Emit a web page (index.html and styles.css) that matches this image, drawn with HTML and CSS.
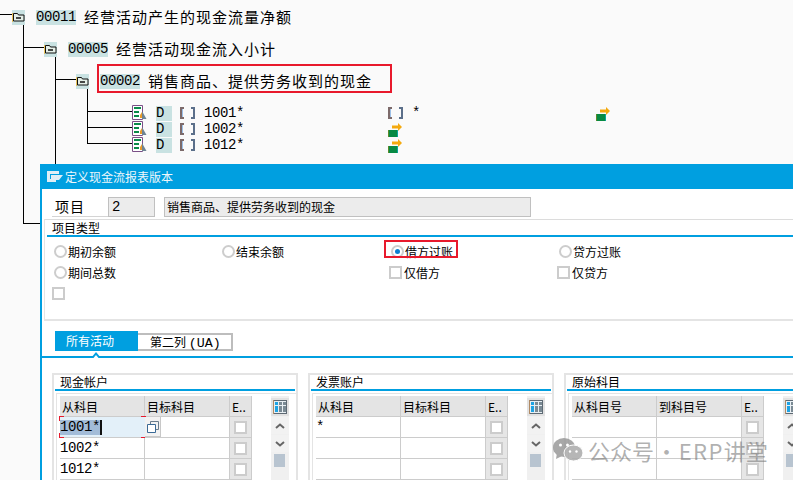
FILE: index.html
```html
<!DOCTYPE html>
<html lang="zh">
<head>
<meta charset="utf-8">
<title>定义现金流报表版本</title>
<link rel="stylesheet" href="styles.css">
</head>
<body>
<svg width="0" height="0" class="defs">
  <symbol id="folder" viewBox="0 0 13 15">
    <path d="M1.500 3.500h4l1 1.500h5.500v6H1.500z" fill="#e4efe8" stroke="#111"/>
    <path d="M.5 3v9" stroke="#e8c35a"/>
    <path d="M4 8h5" stroke="#111" stroke-width="1.500"/>
  </symbol>
  <symbol id="doc" viewBox="0 0 15 16">
    <path d="M.5 .5h10v14H.5z" fill="#fff" stroke="#7a4f86"/>
    <path d="M2 3h7M2 7h5M2 11h5" stroke="#0a8a4a" stroke-width="2"/>
    <path d="M10 6l4.500 8H10z" fill="#6f8494"/>
    <path d="M8 10l2-3v6H8z" fill="#e89a2a"/>
  </symbol>
  <symbol id="move" viewBox="0 0 15 14">
    <path d="M0 7h10v7H0z" fill="#078a43"/>
    <path d="M9 7h1v7H9z" fill="#0aa59a"/>
    <path d="M0 7h1v7H0z" fill="#5d8a2a"/>
    <path d="M4 2.500h6V0l4 4-4 4V5.500H4z" fill="#f4a90e"/>
  </symbol>
  <symbol id="cols" viewBox="0 0 14 14">
    <path d="M0 0h14v14H0z" fill="#5e6a74"/>
    <path d="M0 0h1v14H0z" fill="#b08a64"/>
    <path d="M1 1h12v12H1z" fill="#e8eef2"/>
    <path d="M2 2h3v10H2z" fill="#1ea3e3"/>
    <path d="M6 2h3v10H6z" fill="#7a8a94"/>
    <path d="M10 2h3v10h-3z" fill="#7a8a94"/>
    <path d="M1 5h12v1H1z" fill="#e8eef2"/>
  </symbol>
  <symbol id="up" viewBox="0 0 10 6">
    <path d="M1 5l4-3.500L9 5" fill="none" stroke="#666" stroke-width="2"/>
  </symbol>
  <symbol id="down" viewBox="0 0 10 6">
    <path d="M1 1l4 3.500L9 1" fill="none" stroke="#666" stroke-width="2"/>
  </symbol>
</svg>

<main class="screen">
  <svg class="connectors" width="793" height="480" shape-rendering="crispEdges">
    <path d="M0 14.500H12M23.500 25V223.500H40M24 47.500H44M55.500 57V164M56 79.500H76M87.500 89V143.500H132M88 111.500H132M88 127.500H132" fill="none" stroke="#000"/>
  </svg>

  <section class="tree">
    <div class="node level-1">
      <span class="node-icon"><svg width="13" height="15"><use href="#folder"/></svg></span>
      <span class="code">00011</span><span class="node-text">经营活动产生的现金流量净额</span>
    </div>
    <div class="node level-2">
      <span class="node-icon"><svg width="13" height="15"><use href="#folder"/></svg></span>
      <span class="code">00005</span><span class="node-text">经营活动现金流入小计</span>
    </div>
    <div class="node level-3">
      <span class="node-icon"><svg width="13" height="15"><use href="#folder"/></svg></span>
      <span class="code">00002</span><span class="node-text">销售商品、提供劳务收到的现金</span>
      <span class="mark mark-tree"></span>
    </div>
    <div class="leaves">
      <div class="leaf">
        <svg width="15" height="16"><use href="#doc"/></svg>
        <span class="leaf-d">D</span><span class="bracket"><i></i><i></i></span><span class="mono">1001*</span>
        <span class="leaf-mid"><span class="bracket"><i></i><i></i></span><span class="mono star">*</span></span>
        <svg class="move" width="15" height="14"><use href="#move"/></svg>
      </div>
      <div class="leaf">
        <svg width="15" height="16"><use href="#doc"/></svg>
        <span class="leaf-d">D</span><span class="bracket"><i></i><i></i></span><span class="mono">1002*</span>
        <svg class="move" width="15" height="14"><use href="#move"/></svg>
        <span></span>
      </div>
      <div class="leaf">
        <svg width="15" height="16"><use href="#doc"/></svg>
        <span class="leaf-d">D</span><span class="bracket"><i></i><i></i></span><span class="mono">1012*</span>
        <svg class="move" width="15" height="14"><use href="#move"/></svg>
        <span></span>
      </div>
    </div>
  </section>

  <section class="dialog">
    <header class="titlebar">
      <svg width="16" height="11" viewBox="0 0 16 11"><path d="M0 0h12v3H3v5h6v3H0z" fill="#dfeef6"/><path d="M4 4h12l-4 5H4z" fill="#dfeef6"/></svg>
      <span>定义现金流报表版本</span>
    </header>

    <div class="item-row">
      <span class="item-label">项目</span>
      <span class="field field-short">2</span>
      <span class="field field-long">销售商品、提供劳务收到的现金</span>
    </div>

    <fieldset class="type-box">
      <div class="box-title">项目类型</div>
      <div class="options">
        <label class="opt"><span class="radio"></span>期初余额</label>
        <label class="opt"><span class="radio"></span>结束余额</label>
        <label class="opt"><span class="radio on"></span>借方过账<span class="mark mark-opt"></span></label>
        <label class="opt"><span class="radio"></span>贷方过账</label>
        <label class="opt"><span class="radio"></span>期间总数</label>
        <span></span>
        <label class="opt"><span class="check"></span>仅借方</label>
        <label class="opt"><span class="check"></span>仅贷方</label>
        <label class="opt"><span class="check"></span></label>
      </div>
    </fieldset>

    <nav class="tabs">
      <span class="tab tab-on">所有活动<svg class="caret" width="10" height="7" viewBox="0 0 10 7"><path d="M0 7l5-6 5 6z" fill="#009fe0"/><path d="M2.500 7l2.500-3 2.500 3z" fill="#fff"/></svg></span>
      <span class="tab">第二列 <span class="tab-latin">(UA)</span></span>
    </nav>

    <div class="groups">
      <div class="group">
        <div class="group-title">现金帐户</div>
        <div class="group-body">
          <div class="table">
            <div class="th">从科目</div><div class="th">目标科目</div><div class="th">E..</div>
            <div class="td td-active"><span class="sel">1001*</span><i class="cursor"></i><span class="corner c1"></span><span class="corner c2"></span><span class="corner c3"></span><span class="corner c4"></span></div>
            <div class="td"><span class="f4"><svg width="12" height="12" viewBox="0 0 12 12"><path d="M3.500 .5h8v8h-8z" fill="none" stroke="#6a7c8c"/><path d="M.5 3.500h8v8h-8z" fill="#fff" stroke="#3a6a96"/></svg></span></div>
            <div class="tc"><span class="check"></span></div>
            <div class="td">1002*</div><div class="td"></div><div class="tc"><span class="check"></span></div>
            <div class="td">1012*</div><div class="td"></div><div class="tc"><span class="check"></span></div>
          </div>
          <div class="scroll">
            <span class="sb sb-head"><svg width="14" height="14"><use href="#cols"/></svg></span>
            <span class="sb"><svg width="10" height="6"><use href="#up"/></svg></span>
            <span class="sb"><svg width="10" height="6"><use href="#down"/></svg></span>
            <span class="thumb"></span>
          </div>
        </div>
      </div>

      <div class="group">
        <div class="group-title">发票账户</div>
        <div class="group-body">
          <div class="table">
            <div class="th">从科目</div><div class="th">目标科目</div><div class="th">E..</div>
            <div class="td">*</div><div class="td"></div><div class="tc"><span class="check"></span></div>
            <div class="td"></div><div class="td"></div><div class="tc"><span class="check"></span></div>
            <div class="td"></div><div class="td"></div><div class="tc"><span class="check"></span></div>
          </div>
          <div class="scroll">
            <span class="sb sb-head"><svg width="14" height="14"><use href="#cols"/></svg></span>
            <span class="sb"><svg width="10" height="6"><use href="#up"/></svg></span>
            <span class="sb"><svg width="10" height="6"><use href="#down"/></svg></span>
            <span class="thumb"></span>
          </div>
        </div>
      </div>

      <div class="group">
        <div class="group-title">原始科目</div>
        <div class="group-body">
          <div class="table">
            <div class="th">从科目号</div><div class="th">到科目号</div><div class="th">E..</div>
            <div class="td"></div><div class="td"></div><div class="tc"><span class="check"></span></div>
            <div class="td"></div><div class="td"></div><div class="tc"><span class="check"></span></div>
            <div class="td"></div><div class="td"></div><div class="tc"><span class="check"></span></div>
          </div>
          <div class="scroll">
            <span class="sb sb-head"><svg width="14" height="14"><use href="#cols"/></svg></span>
            <span class="sb"><svg width="10" height="6"><use href="#up"/></svg></span>
            <span class="sb"><svg width="10" height="6"><use href="#down"/></svg></span>
            <span class="thumb"></span>
          </div>
        </div>
      </div>
    </div>
  </section>

  <aside class="watermark">
    <svg width="30" height="24" viewBox="0 0 30 24"><ellipse cx="11" cy="9.500" rx="11" ry="9.500" fill="#9a9a9a"/><path d="M4 15l-1 6 6-3z" fill="#9a9a9a"/><ellipse cx="20.500" cy="15" rx="9.500" ry="8" fill="#aaa" stroke="#fff"/><circle cx="7.500" cy="7" r="1.500" fill="#fff"/><circle cx="14.500" cy="7" r="1.500" fill="#fff"/><circle cx="17" cy="13.500" r="1.200" fill="#fff"/><circle cx="23.500" cy="13.500" r="1.200" fill="#fff"/></svg>
    <span class="wm-text">公众号 · <span class="wm-latin">ERP</span>讲堂</span>
  </aside>
</main>
</body>
</html>
```
FILE: styles.css
```css
* { box-sizing: border-box; }
html, body { margin: 0; padding: 0; }
body {
  background: #fafafa;
  color: #000;
  font-family: "Noto Sans CJK SC", "Liberation Sans", sans-serif;
  font-size: 12px;
}
.defs { position: absolute; }
.screen {
  position: relative;
  width: 793px;
  height: 480px;
  overflow: hidden;
}
.connectors { position: absolute; left: 0; top: 0; }

.tree { padding-top: 10px; position: relative; }
.node {
  display: flex;
  align-items: center;
  height: 15px;
  position: relative;
}
.level-1 { margin-left: 12px; }
.level-2 { margin-left: 44px; margin-top: 17px; }
.level-3 { margin-left: 76px; margin-top: 17px; }
.node-icon {
  width: 13px;
  height: 15px;
  background: #c9e2e2;
  margin-right: 11px;
  display: block;
}
.node-icon svg { display: block; }
.code {
  font-family: "Liberation Mono", monospace;
  font-size: 14px;
  letter-spacing: -0.4px;
  line-height: 15px;
  width: 40px;
  background: #c9e2e2;
  margin-right: 8px;
}
.node-text {
  font-size: 15px;
  letter-spacing: 1px;
  line-height: 15px;
  margin-bottom: 3px;
  white-space: nowrap;
}
.mark { position: absolute; border: 2px solid #e8192c; }
.mark-tree { left: 21px; top: -10px; width: 295px; height: 29px; }

.leaves { margin-left: 132px; margin-top: 16px; }
.leaf {
  display: grid;
  grid-template-columns: 24px 24px 24px 184px 208px 15px;
  align-items: center;
  height: 16px;
}
.leaf-d {
  width: 16px;
  height: 15px;
  background: #c9e2e2;
  font-family: "Liberation Mono", monospace;
  font-size: 14px;
  line-height: 15px;
}
.mono {
  font-family: "Liberation Mono", monospace;
  font-size: 14px;
  letter-spacing: -0.4px;
  line-height: 15px;
}
.star { margin-left: 9px; }
.bracket { display: inline-flex; gap: 7px; width: 15px; vertical-align: middle; }
.bracket i {
  display: block;
  width: 4px;
  height: 12px;
  border: 2px solid #7c6a6a;
  border-right: 0;
  box-shadow: inset 1px 0 0 #9cc0e8;
}
.bracket i + i { border: 2px solid #5b6f8a; border-left: 0; box-shadow: none; }
.leaf-mid { display: flex; align-items: center; }
.move { align-self: end; }

.dialog {
  position: absolute;
  left: 40px;
  top: 164px;
  width: 780px;
  height: 316px;
  background: #fff;
  border-left: 2px solid #009fe0;
  overflow: hidden;
}
.titlebar {
  height: 25px;
  margin-left: -2px;
  background: #009fe0;
  color: #eef7fb;
  display: flex;
  align-items: center;
  gap: 2px;
  padding-left: 7px;
  font-size: 12px;
}
.item-row {
  display: flex;
  height: 20px;
  margin-top: 8px;
  align-items: stretch;
}
.item-label {
  width: 56px;
  margin-left: 10px;
  padding-left: 3px;
  font-size: 14px;
  letter-spacing: 1px;
  line-height: 18px;
  border-bottom: 1px solid #d4d4d4;
}
.field {
  background: #ececec;
  border: 1px solid #c0c0c0;
  line-height: 18px;
  padding-left: 2px;
  white-space: nowrap;
}
.field-short { width: 47px; margin-right: 9px; font-family: "Liberation Mono", monospace; font-size: 14px; padding-left: 3px; }
.field-long { width: 367px; }

.type-box {
  margin: 2px 0 0 2px;
  padding: 0 0 0 2px;
  height: 102px;
  border: 0;
  border-top: 1px solid #dcdcdc;
  border-left: 1px solid #e4e4e4;
  border-bottom: 2px solid #e4e4e4;
}
.box-title {
  padding-left: 5px;
  height: 17px;
  line-height: 16px;
  border-bottom: 2px solid #009fe0;
}
.options {
  display: grid;
  grid-template-columns: 168px 169px 168px 168px;
  grid-auto-rows: 21px;
  padding: 4px 0 0 7px;
  margin-top: 0;
}
.opt { display: flex; align-items: center; gap: 1px; position: relative; line-height: 16px; }
.radio {
  width: 13px;
  height: 13px;
  border-radius: 50%;
  border: 2px solid #cdcdcd;
  background: #fff;
  display: flex;
  align-items: center;
  justify-content: center;
}
.radio.on::after {
  content: "";
  width: 5px;
  height: 5px;
  border-radius: 50%;
  background: #0a7fd0;
}
.check {
  width: 13px;
  height: 13px;
  border: 2px solid #cccccc;
  background: #fff;
  display: block;
  flex: none;
  margin: 0 1px 0 -2px;
}
.mark-opt { left: -7px; top: -1px; width: 74px; height: 18px; }

.tabs {
  display: flex;
  align-items: flex-end;
  height: 27px;
  margin-top: 10px;
  padding: 0 0 5px 13px;
  border-bottom: 2px solid #009fe0;
}
.tab {
  display: block;
  height: 18px;
  width: 95px;
  border: 2px solid #bdbdbd;
  border-left: 0;
  padding-left: 12px;
  line-height: 14px;
  white-space: nowrap;
}
.tab-latin { font-family: "Liberation Mono", monospace; font-size: 13.33px; }
.tab-on {
  position: relative;
  height: 20px;
  width: 83px;
  background: #009fe0;
  color: #fff;
  border: 0;
  padding-left: 11px;
  line-height: 20px;
}
.caret { position: absolute; left: 36px; top: 20px; display: block; }

.groups {
  display: flex;
  gap: 10px;
  margin: 15px 0 0 10px;
}
.group {
  flex: none;
  width: 246px;
  height: 120px;
  border: 2px solid #e4e4e4;
  border-bottom: 0;
}
.group-title {
  height: 16px;
  line-height: 14px;
  padding-left: 5px;
  margin: 0 1px;
  border-bottom: 2px solid #009fe0;
  white-space: nowrap;
}
.group-body {
  display: flex;
  margin: 2px 0 0 2px;
  padding: 2px 0 0 3px;
  border-top: 1px solid #e4e4e4;
  border-left: 1px solid #e4e4e4;
}
.table {
  display: grid;
  grid-template-columns: 85px 85px 22px;
  grid-auto-rows: 21px;
  width: 192px;
}
.th {
  background: #e4e4e4;
  border-right: 1px solid #ccc;
  border-bottom: 1px solid #ccc;
  padding-left: 2px;
  line-height: 22px;
  white-space: nowrap;
}
.td {
  border-right: 1px solid #ccc;
  border-bottom: 1px solid #ccc;
  position: relative;
  font-family: "Liberation Mono", monospace;
  font-size: 14px;
  letter-spacing: -0.4px;
  line-height: 21px;
  white-space: nowrap;
}
.tc {
  background: #e6e6e6;
  border-right: 1px solid #ccc;
  border-bottom: 1px solid #ccc;
  display: flex;
  align-items: center;
  justify-content: center;
}
.tc .check { margin: 0; }
.td-active { background: #e3f0f9; display: flex; border-right: 0; }
.sel { background: #a3bcd8; height: 15px; line-height: 15px; margin-top: 3px; width: 40px; }
.cursor { display: block; width: 2px; height: 15px; margin-top: 3px; background: #111; }
.corner { position: absolute; width: 5px; height: 5px; border: 0 solid #e8192c; }
.c1 { left: -1px; top: -1px; border-width: 1px 0 0 1px; }
.c2 { right: -1px; top: -1px; border-width: 1px 1px 0 0; }
.c3 { left: -1px; bottom: -1px; border-width: 0 0 1px 1px; }
.c4 { right: -1px; bottom: -1px; border-width: 0 1px 1px 0; }
.f4 {
  display: flex;
  align-items: center;
  justify-content: center;
  width: 16px;
  height: 20px;
  background: #f2f2f2;
  border-right: 1px solid #c8c8c8;
  border-bottom: 1px solid #c8c8c8;
}
.scroll {
  margin-left: 19px;
  width: 18px;
  display: flex;
  flex-direction: column;
  align-items: stretch;
  background: #f0f0f0;
  height: 90px;
}
.sb {
  height: 17px;
  margin-bottom: 1px;
  display: flex;
  align-items: center;
  justify-content: center;
  background: #f2f2f2;
}
.sb-head { background: #e2e2e2; height: 18px; margin-top: 2px; }
.thumb { display: block; height: 13px; width: 11px; background: #b8c4d0; margin: 1px 0 0 3px; }

.watermark {
  position: absolute;
  left: 553px;
  top: 437px;
  display: flex;
  align-items: center;
  gap: 5px;
  color: rgba(110, 110, 110, 0.55);
  font-size: 22px;
  line-height: 26px;
  white-space: nowrap;
}
.wm-text { word-spacing: -3.5px; }
.wm-latin { letter-spacing: 1.3px; }
.watermark svg { display: block; flex: none; opacity: .85; }
```
